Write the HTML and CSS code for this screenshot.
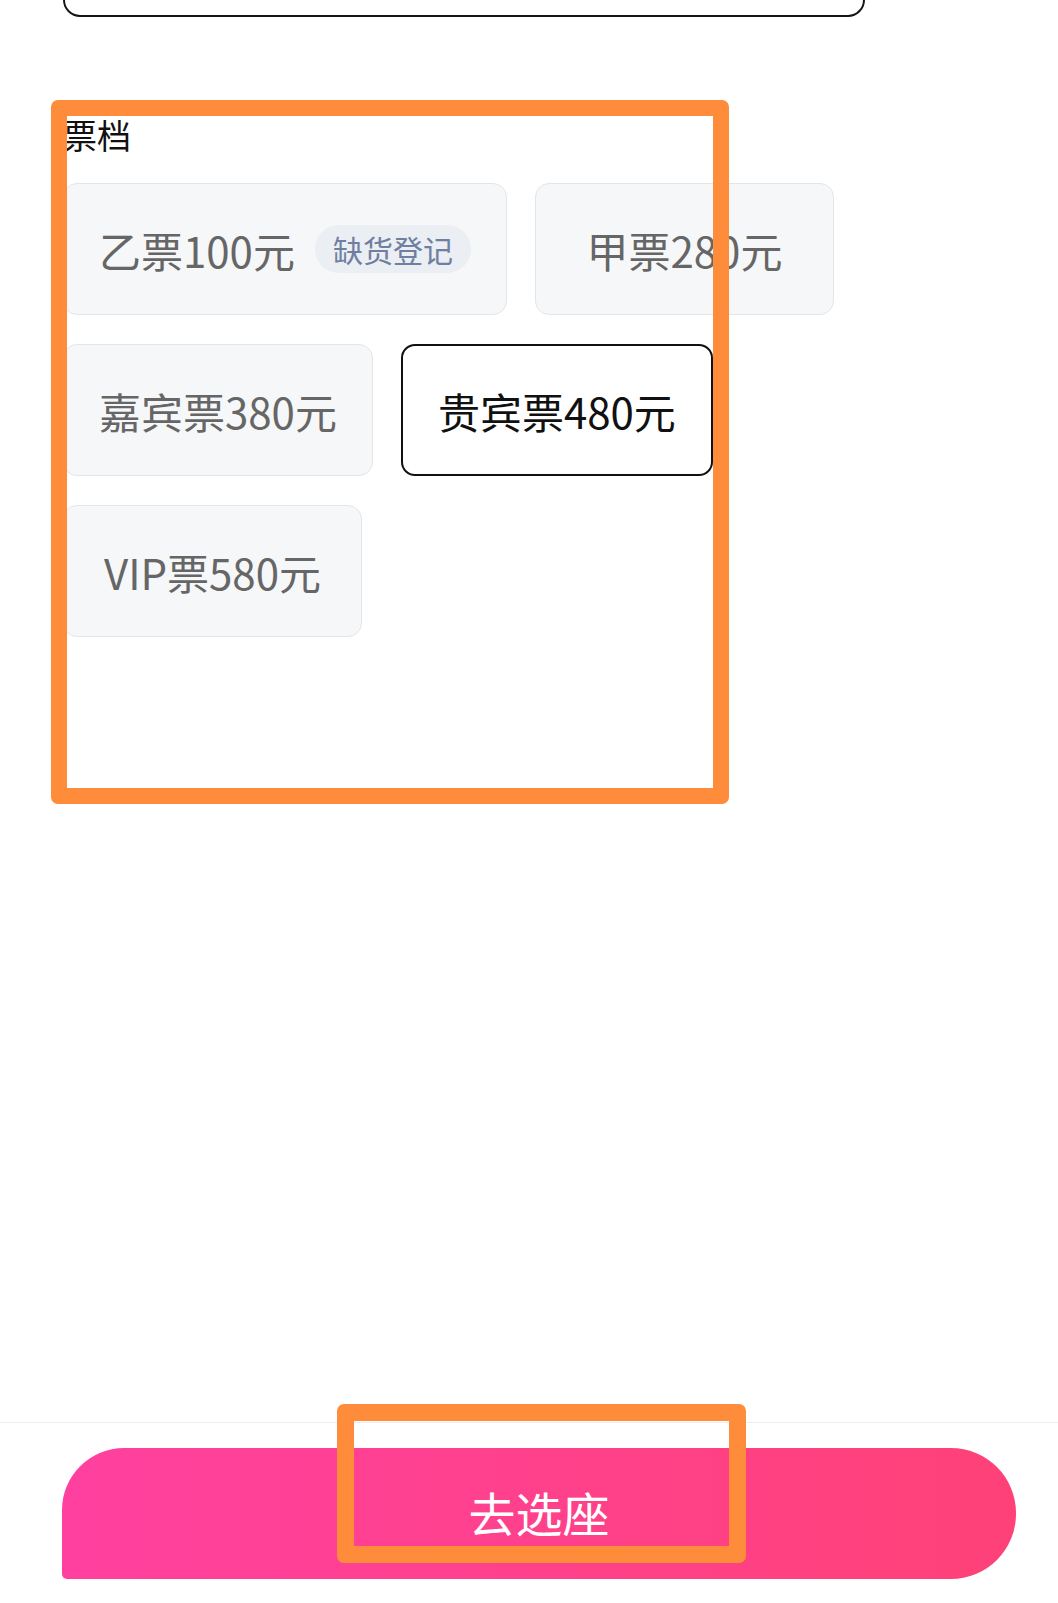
FILE: index.html
```html
<!DOCTYPE html>
<html lang="zh-CN">
<head>
<meta charset="utf-8">
<title>票档</title>
<link rel="stylesheet" href="styles.css">
</head>
<body>
<div class="page">
  <div class="top-box"></div>

  <section class="tier-section">
    <h2 class="tier-title">票档</h2>
    <div class="tier-list">
      <div class="tier">乙票100元<span class="badge">缺货登记</span></div>
      <div class="tier">甲票280元</div>
      <div class="tier">嘉宾票380元</div>
      <div class="tier tier-selected">贵宾票480元</div>
      <div class="tier">VIP票580元</div>
    </div>
  </section>

  <footer class="footer">
    <button class="cta">去选座</button>
  </footer>

  <div class="mark mark-tiers"></div>
  <div class="mark mark-cta"></div>
</div>
</body>
</html>
```

FILE: styles.css
```css
* {
  box-sizing: border-box;
}

html, body {
  margin: 0;
  padding: 0;
  background: #ffffff;
}

body {
  font-family: "Noto Sans CJK SC", "Noto Sans", sans-serif;
  color: #111111;
}

.page {
  position: relative;
  width: 1058px;
  height: 1603px;
  display: flex;
  flex-direction: column;
  overflow: hidden;
}

.top-box {
  height: 17px;
  margin: 0 193px 0 63px;
  border: 2.5px solid #151515;
  border-top: 0;
  border-radius: 0 0 18px 18px;
}

.tier-section {
  padding: 0 63px;
}

.tier-title {
  margin: 101px 0 0 0;
  font-size: 34px;
  line-height: 34px;
  font-weight: 400;
  color: #111111;
}

.tier-list {
  margin-top: 31px;
  display: flex;
  flex-wrap: wrap;
  gap: 29px 28px;
  align-items: flex-start;
}

.tier {
  height: 132px;
  min-width: 299px;
  padding: 0 35px;
  display: flex;
  align-items: center;
  justify-content: center;
  background: #f6f7f9;
  border: 1.5px solid #e4e5e8;
  border-radius: 14px;
  font-size: 42px;
  color: #666666;
  white-space: nowrap;
}

.tier-selected {
  background: #ffffff;
  border: 2.5px solid #111111;
  color: #111111;
}

.badge {
  margin-left: 20px;
  height: 48px;
  padding: 0 18px;
  display: inline-flex;
  align-items: center;
  border-radius: 24px;
  background: #ebeef3;
  color: #6f7fa1;
  font-size: 30px;
}

.footer {
  margin-top: auto;
  border-top: 1.5px solid #ededed;
  padding: 25px 42px 24px 62px;
}

.cta {
  display: flex;
  align-items: center;
  justify-content: center;
  width: 100%;
  height: 131px;
  border: 0;
  border-radius: 62px 65px 65px 5px;
  background: linear-gradient(90deg, #ff409f 0%, #ff4178 100%);
  color: #ffffff;
  font-family: "Noto Sans CJK SC", "Noto Sans", sans-serif;
  font-size: 47px;
  padding: 0 0 4px 0;
}

.mark {
  position: absolute;
  border: 16.5px solid #ff8c3a;
  border-radius: 7px;
  pointer-events: none;
}

.mark-tiers {
  left: 51px;
  top: 100px;
  width: 678px;
  height: 704px;
}

.mark-cta {
  left: 337px;
  top: 1404px;
  width: 409px;
  height: 159px;
  border-width: 17px;
}
```
